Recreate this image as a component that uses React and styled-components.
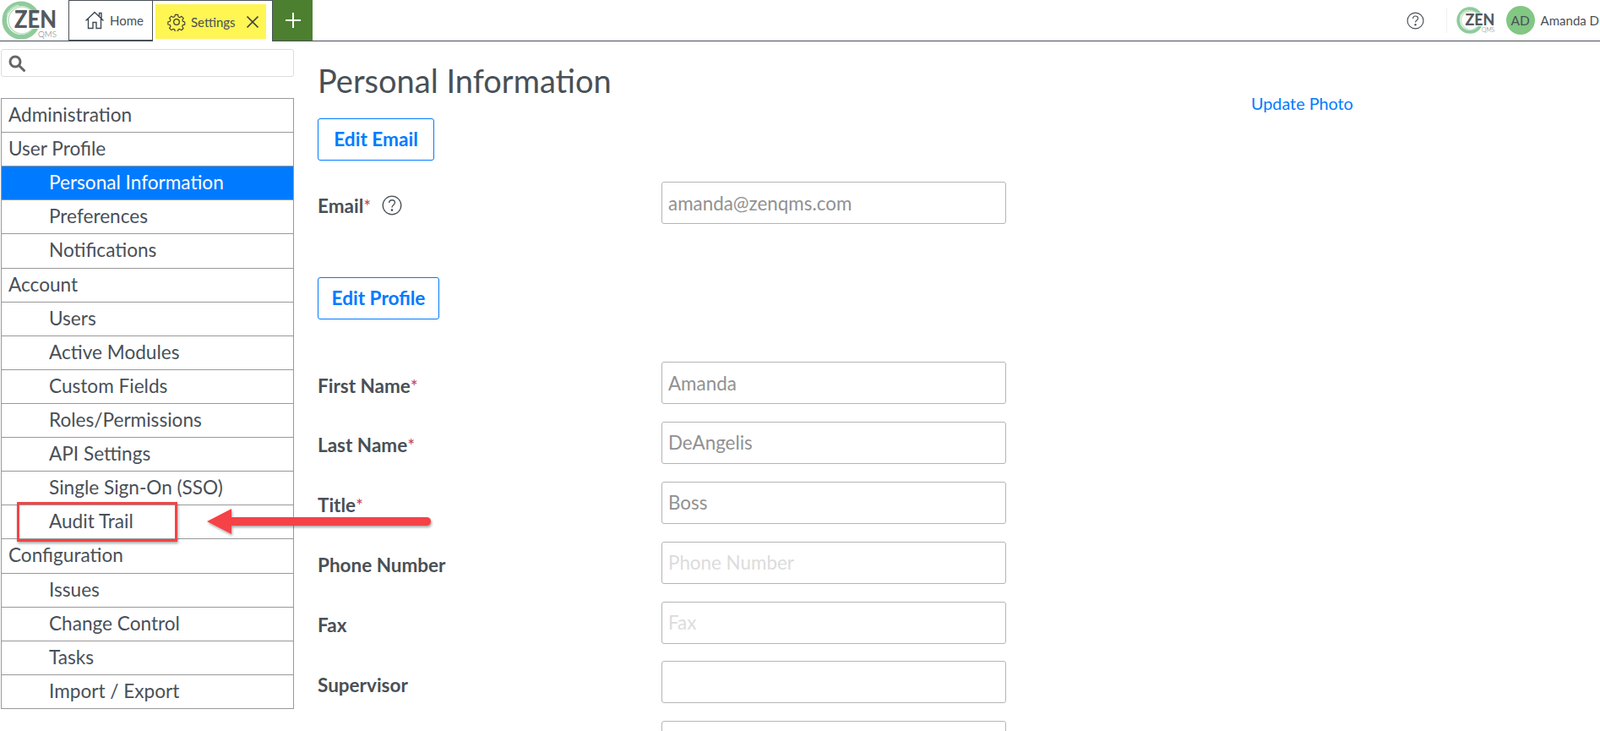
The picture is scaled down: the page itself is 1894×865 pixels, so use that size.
import React from "react";
import styled, { createGlobalStyle } from "styled-components";

const Global = createGlobalStyle`
  html, body { margin: 0; padding: 0; height: 865px; overflow: hidden; background: #fff; }
  body { font-family: Lato, "Open Sans", sans-serif; color: #495057; }
  * { box-sizing: border-box; }
`;

const Page = styled.div`
  position: relative;
  width: 1894px;
  height: 865px;
  overflow: hidden;
`;

const TopBar = styled.header`
  display: flex;
  align-items: stretch;
  height: 49px;
  border-bottom: 1px solid #495057;
`;

const LogoSlot = styled.div`
  width: 81px;
  padding: 1px 0 0 2px;
`;

const Tab = styled.div`
  display: flex;
  align-items: center;
  width: ${(p) => p.$width}px;
  padding: ${(p) => p.$padding};
  border: 1px solid #495057;
  border-bottom: ${(p) => (p.$open ? "none" : "1px solid #495057")};
  border-left: ${(p) => (p.$open ? "none" : "1px solid #495057")};
  border-top: 1px solid #495057;
  height: ${(p) => (p.$open ? "49px" : "48px")};
  background: #fff;
  font-size: 15px;
`;

const TabLabel = styled.span`
  color: #495057;
  margin-left: 6px;
`;

const Highlight = styled.div`
  display: flex;
  align-items: center;
  width: 131px;
  height: 41px;
  padding-left: 14px;
  margin-top: 1px;
  background: #fff553;
  gap: 6px;
  font-size: 15px;
  color: #495057;
`;

const AddTab = styled.div`
  display: flex;
  align-items: center;
  justify-content: center;
  width: 47px;
  background: #4c7f2f;
`;

const Right = styled.div`
  display: flex;
  align-items: center;
  margin-left: auto;
  white-space: nowrap;
`;

const HelpSlot = styled.div`
  display: flex;
  align-items: center;
  height: 30px;
  padding: 0 26px 0 0;
  margin-right: 11px;
  border-right: 1px solid #f0f0f0;
`;

const Avatar = styled.div`
  display: flex;
  align-items: center;
  justify-content: center;
  width: 34px;
  height: 34px;
  margin: 0 7px 0 13px;
  border-radius: 50%;
  background: #82c784;
  font-size: 15.5px;
  color: #495057;
`;

const UserName = styled.span`
  font-size: 15px;
  color: #495057;
  padding-right: 1px;
`;

const Body = styled.div`
  display: flex;
  align-items: flex-start;
`;

const Side = styled.aside`
  width: 347px;
  margin: 9px 0 0 1px;
  flex: none;
`;

const SearchBox = styled.div`
  display: flex;
  align-items: center;
  height: 33px;
  padding-left: 8px;
  border: 1px solid #ddd;
  border-radius: 3px;
  margin-bottom: 25px;
`;

const Menu = styled.nav`
  border: 1px solid #999;
  border-bottom: none;
`;

const MenuRow = styled.div`
  display: flex;
  align-items: center;
  height: 40.11px;
  padding: 0 0 2px ${(p) => (p.$child ? "56px" : "8px")};
  border-bottom: 1px solid #999;
  font-size: 22.6px;
  background: ${(p) => (p.$active ? "#007bff" : "#fff")};
  color: ${(p) => (p.$active ? "#fff" : "#495057")};
`;

const Main = styled.main`
  display: flex;
  padding-left: 28px;
`;

const FormCol = styled.div`
  width: 815px;
`;

const Title = styled.h1`
  margin: 23px 0 0;
  height: 68px;
  font-size: 38px;
  line-height: 46px;
  font-weight: 400;
  color: #495057;
`;

const OutlineButton = styled.button`
  display: block;
  height: 50px;
  padding: 0 0 2px;
  width: ${(p) => p.$width}px;
  border: 1px solid #007bff;
  border-radius: 3px;
  background: #fff;
  color: #007bff;
  font: 700 22.6px Lato, sans-serif;
  margin-bottom: ${(p) => p.$after}px;
`;

const Row = styled.div`
  display: grid;
  grid-template-columns: 407px 408px;
  align-items: center;
  height: 50px;
  margin-bottom: ${(p) => p.$after ?? 20.9}px;
`;

const Label = styled.label`
  display: flex;
  align-items: center;
  gap: 13px;
  font-size: 22.5px;
  font-weight: 700;
  color: #495057;
  padding-top: 6px;
`;

const Req = styled.span`
  color: #c0405a;
  font-size: 21px;
  font-weight: 400;
  line-height: 0;
`;

const Field = styled.input`
  width: 408px;
  height: 50px;
  padding: 0 7px;
  border: 1px solid #b5b5b5;
  border-radius: 3px;
  background: #fff;
  font: 400 22.4px Lato, sans-serif;
  color: #495057;
  &::placeholder { color: ${(p) => (p.$filled ? "#919191" : "#dcdcdc")}; opacity: 1; }
`;

const PhotoCol = styled.div`
  padding: 61px 0 0 290px;
`;

const PhotoLink = styled.a`
  color: #007bff;
  font-size: 19.8px;
  white-space: nowrap;
`;

const MarkBox = styled.div`
  position: absolute;
  left: 20px;
  top: 594px;
  width: 190px;
  height: 47px;
  border: 3px solid #f44346;
  box-shadow: 1px 2px 3px rgba(0, 0, 0, 0.35);
`;

const Arrow = styled.svg`
  position: absolute;
  left: 240px;
  top: 596px;
  overflow: visible;
`;

const LogoMark = styled.svg`
  overflow: visible;
  flex: none;
`;

const Wordmark = styled.text`
  font-family: Lato, sans-serif;
  font-weight: 900;
  fill: #55595c;
`;

const Sub = styled.text`
  font-family: Lato, sans-serif;
  font-weight: 300;
  fill: #6b6f72;
`;

function Logo({ size = 66 }) {
  const h = (size * 46) / 66;
  return (
    <LogoMark width={size} height={h} viewBox="0 0 66 46">
      <circle cx="23" cy="23" r="19.8" fill="none" stroke="#8fcb9b" strokeWidth="5.5" />
      <circle cx="24" cy="23" r="16" fill="none" stroke="#b9e0c2" strokeWidth="1.5" />
      <path d="M6 17a18 18 0 0 1 14-12" fill="none" stroke="#d5eedb" strokeWidth="1" />
      <rect x="14" y="11" width="52" height="22" fill="#fff" />
      <Wordmark x="15" y="32" fontSize="28" textLength="50" lengthAdjust="spacingAndGlyphs">ZEN</Wordmark>
      <Sub x="43" y="43" fontSize="10" textLength="22" lengthAdjust="spacingAndGlyphs">QMS</Sub>
    </LogoMark>
  );
}

const HomeIcon = () => (
  <svg width="24" height="24" viewBox="0 0 24 24" fill="none" stroke="#3f4a55" strokeWidth="1.4">
    <path d="M1.5 12.5 12 2.5l10.5 10M4.5 10v11.5h5.5V14.5h4v7h5.5V10M17.5 7.5V3.5h2.5v6.2" />
  </svg>
);

const GearIcon = () => (
  <svg width="22" height="22" viewBox="0 0 24 24" fill="none" stroke="#3f3f3a" strokeWidth="1.4" strokeLinejoin="round">
    <circle cx="12" cy="12" r="3.6" />
    <path d="M10 1.5h4l.6 3.1 2 .9 2.7-1.7 2.8 2.8-1.7 2.7.9 2 .1 0 2.6.7v3.9l-3 .6-.8 2 1.7 2.7-2.8 2.8-2.7-1.7-2 .8-.6 2.7h-4l-.6-2.9-2-.8-2.6 1.7-2.9-2.8 1.7-2.7-.8-2-3-.6v-3.9l3-.7.8-2-1.7-2.7 2.9-2.8 2.6 1.7 2-.9z" transform="translate(1.3 1.3) scale(.89)" />
  </svg>
);

const CloseIcon = styled.svg`
  margin-left: 6px;
`;

const PlusIcon = () => (
  <svg width="18" height="18" viewBox="0 0 18 18" stroke="#fff" strokeWidth="2">
    <path d="M9 0v18M0 9h18" />
  </svg>
);

const HelpIcon = ({ size = 21 }) => (
  <svg width={size} height={size} viewBox="0 0 20 20" fill="none" stroke="#495057" strokeWidth="1.1">
    <circle cx="10" cy="10" r="9" />
    <path d="M7.2 7.6c0-1.7 1.3-2.8 2.9-2.8s2.8 1.1 2.8 2.5c0 2.2-2.9 2.3-2.9 4.7" />
    <circle cx="10" cy="14.6" r=".6" fill="#495057" />
  </svg>
);

const SearchIcon = () => (
  <svg width="20" height="20" viewBox="0 0 20 20" fill="none" stroke="#666" strokeWidth="3">
    <circle cx="8" cy="8" r="6" />
    <path d="M12.5 12.5l6 6" strokeLinecap="round" />
  </svg>
);

const menu = [
  ["Administration"],
  ["User Profile"],
  ["Personal Information", 1, 1],
  ["Preferences", 1],
  ["Notifications", 1],
  ["Account"],
  ["Users", 1],
  ["Active Modules", 1],
  ["Custom Fields", 1],
  ["Roles/Permissions", 1],
  ["API Settings", 1],
  ["Single Sign-On (SSO)", 1],
  ["Audit Trail", 1],
  ["Configuration"],
  ["Issues", 1],
  ["Change Control", 1],
  ["Tasks", 1],
  ["Import / Export", 1],
];

const fields = [
  ["First Name", "Amanda", true, true],
  ["Last Name", "DeAngelis", true, true],
  ["Title", "Boss", true, true],
  ["Phone Number", "Phone Number", false, false],
  ["Fax", "Fax", false, false],
  ["Supervisor", "", false, false],
  ["", "", false, false],
];

export default function App() {
  return (
    <Page>
      <Global />
      <TopBar>
        <LogoSlot><Logo /></LogoSlot>
        <Tab $width={100} $padding="0 0 0 18px">
          <HomeIcon />
          <TabLabel>Home</TabLabel>
        </Tab>
        <Tab $width={142} $padding="0 0 0 3px" $open>
          <Highlight>
            <GearIcon />
            Settings
            <CloseIcon width="16" height="16" viewBox="0 0 16 16" stroke="#3f3f3a" strokeWidth="1.7">
              <path d="M1.5 1.5l13 13M14.5 1.5l-13 13" />
            </CloseIcon>
          </Highlight>
        </Tab>
        <AddTab><PlusIcon /></AddTab>
        <Right>
          <HelpSlot><HelpIcon /></HelpSlot>
          <Logo size={46} />
          <Avatar>AD</Avatar>
          <UserName>Amanda D</UserName>
        </Right>
      </TopBar>
      <Body>
        <Side>
          <SearchBox><SearchIcon /></SearchBox>
          <Menu>
            {menu.map(([text, child, active]) => (
              <MenuRow key={text} $child={child} $active={active}>{text}</MenuRow>
            ))}
          </Menu>
        </Side>
        <Main>
          <FormCol>
            <Title>Personal Information</Title>
            <OutlineButton $width={138} $after={25}>Edit Email</OutlineButton>
            <Row $after={63}>
              <Label>
                <span>Email<Req>*</Req></span>
                <HelpIcon size={24} />
              </Label>
              <Field $filled placeholder="amanda@zenqms.com" />
            </Row>
            <OutlineButton $width={144} $after={50}>Edit Profile</OutlineButton>
            {fields.map(([label, ph, req, filled], i) => (
              <Row key={i}>
                <Label>
                  <span>{label}{req && <Req>*</Req>}</span>
                </Label>
                <Field $filled={filled} placeholder={ph} />
              </Row>
            ))}
          </FormCol>
          <PhotoCol><PhotoLink>Update Photo</PhotoLink></PhotoCol>
        </Main>
      </Body>
      <MarkBox />
      <Arrow width="270" height="40" viewBox="0 0 270 40">
        <defs>
          <filter id="s" x="-5%" y="-30%" width="110%" height="180%">
            <feDropShadow dx="1" dy="2" stdDeviation="1.5" floodOpacity="0.35" />
          </filter>
        </defs>
        <path d="M5 21 L34 6 V16 L265 16 Q270 16 270 21 Q270 26 265 26 L34 26 V36 Z" fill="#f44346" filter="url(#s)" />
      </Arrow>
    </Page>
  );
}
